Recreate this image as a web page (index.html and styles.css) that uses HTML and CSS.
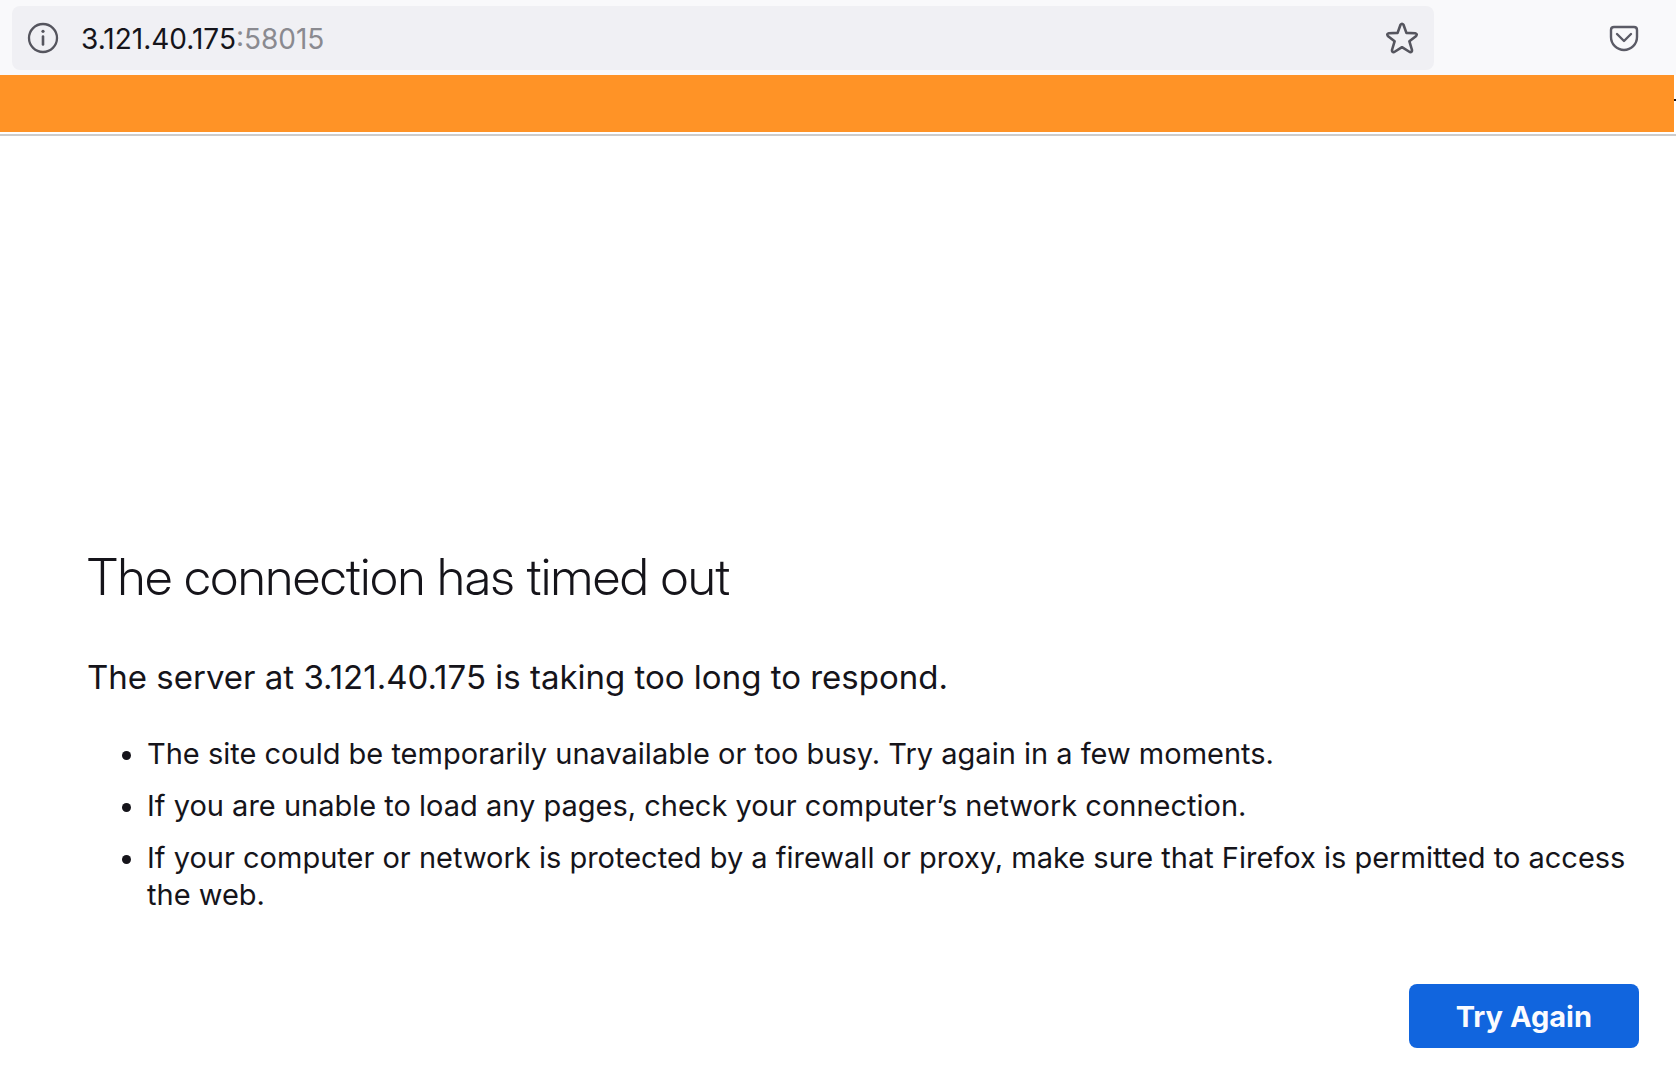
FILE: index.html
```html
<!DOCTYPE html>
<html lang="en">
<head>
<meta charset="utf-8">
<title>Problem loading page</title>
<link rel="stylesheet" href="styles.css">
</head>
<body>
<header class="toolbar">
  <div class="urlbar">
    <button class="icon-button" type="button" aria-label="Site information">
      <svg width="32" height="32" viewBox="0 0 32 32" fill="none" stroke="#55555e" stroke-width="2.3">
        <circle cx="16" cy="16" r="14"/>
        <path d="M16 14.500v8" stroke-width="2.6" stroke-linecap="round"/>
        <circle cx="16" cy="9.300" r="1.600" fill="#55555e" stroke="none"/>
      </svg>
    </button>
    <div class="address" role="textbox" tabindex="0" aria-label="Address">3.121.40.175<span class="port">:58015</span></div>
    <button class="icon-button" type="button" aria-label="Bookmark this page">
      <svg width="32" height="32" viewBox="0 0 32 32" fill="none" stroke="#55555e" stroke-width="2.6" stroke-linejoin="round">
        <path d="M14.500 2.800Q16 .6 17.500 2.800L20.400 10.900L29.200 11.200Q31.600 11.700 30.200 13.900L23.400 19.300L26 28Q26.200 30.600 23.700 30L16 25.200L8.300 30Q5.800 30.600 6 28L8.600 19.300L1.800 13.900Q.4 11.700 2.800 11.200L11.600 10.900Z"/>
      </svg>
    </button>
  </div>
  <button class="icon-button" type="button" aria-label="Save to Pocket">
    <svg width="32" height="32" viewBox="0 0 32 32" fill="none" stroke="#5b5b66" stroke-width="2.4" stroke-linecap="round" stroke-linejoin="round">
      <path d="M6 5h20q3 0 3 3v7a13 13 0 0 1-26 0V8q0-3 3-3z"/>
      <path d="M9 12l7 7 7-7"/>
    </svg>
  </button>
</header>
<div class="bookmarks">
  <div class="banner"></div>
  <div class="overflow-mark"></div>
</div>
<main class="error-page">
  <h1 class="title">The connection has timed out</h1>
  <p class="summary">The server at 3.121.40.175 is taking too long to respond.</p>
  <ul class="hints">
    <li>The site could be temporarily unavailable or too busy. Try again in a few moments.</li>
    <li>If you are unable to load any pages, check your computer’s network connection.</li>
    <li>If your computer or network is protected by a firewall or proxy, make sure that Firefox is permitted to access the web.</li>
  </ul>
  <div class="actions">
    <button class="primary" type="button">Try Again</button>
  </div>
</main>
</body>
</html>
```
FILE: styles.css
```css
* { box-sizing: border-box; }

body {
  margin: 0;
  background: #fff;
  color: #15141a;
  font-family: Inter, "Liberation Sans", sans-serif;
  font-size: 29px;
  line-height: 37px;
}

.toolbar {
  display: flex;
  align-items: center;
  gap: 174px;
  padding: 6px 36px 5px 12px;
  background: #f9f9fb;
}

.urlbar {
  display: flex;
  flex: 1;
  align-items: center;
  height: 64px;
  padding: 0 16px 0 15px;
  border-radius: 8px;
  background: #f0f0f4;
}

.icon-button {
  display: flex;
  padding: 0;
  border: 0;
  background: none;
}

.address {
  flex: 1;
  padding: 2px 0 0 22px;
  font-size: 28px;
}

.port { color: #8a8a90; }

.bookmarks {
  display: flex;
  height: 61px;
  padding-bottom: 2px;
  border-bottom: 2px solid #ccc;
}

.banner {
  flex: 1;
  background: #ff9326;
}

.overflow-mark {
  width: 2px;
  height: 2px;
  margin-top: 24px;
  background: #15141a;
}

.error-page { padding: 409px 37px 40px 87px; }

.title {
  margin: 0;
  font-family: "Inter Display", Inter, "Liberation Sans", sans-serif;
  font-size: 51px;
  font-weight: 300;
  line-height: 64px;
}

.summary {
  margin: 46px 0 0;
  font-size: 33px;
  line-height: 44px;
}

.hints {
  margin: 36px 0 0;
  padding-left: 60px;
}

.hints li + li { margin-top: 15px; }

.actions {
  display: flex;
  justify-content: flex-end;
  margin-top: 71px;
}

.primary {
  height: 64px;
  padding: 0 47px;
  border: 0;
  border-radius: 8px;
  background: #1165de;
  color: #fbfbfe;
  font: 700 29px/37px Inter, "Liberation Sans", sans-serif;
}
```
